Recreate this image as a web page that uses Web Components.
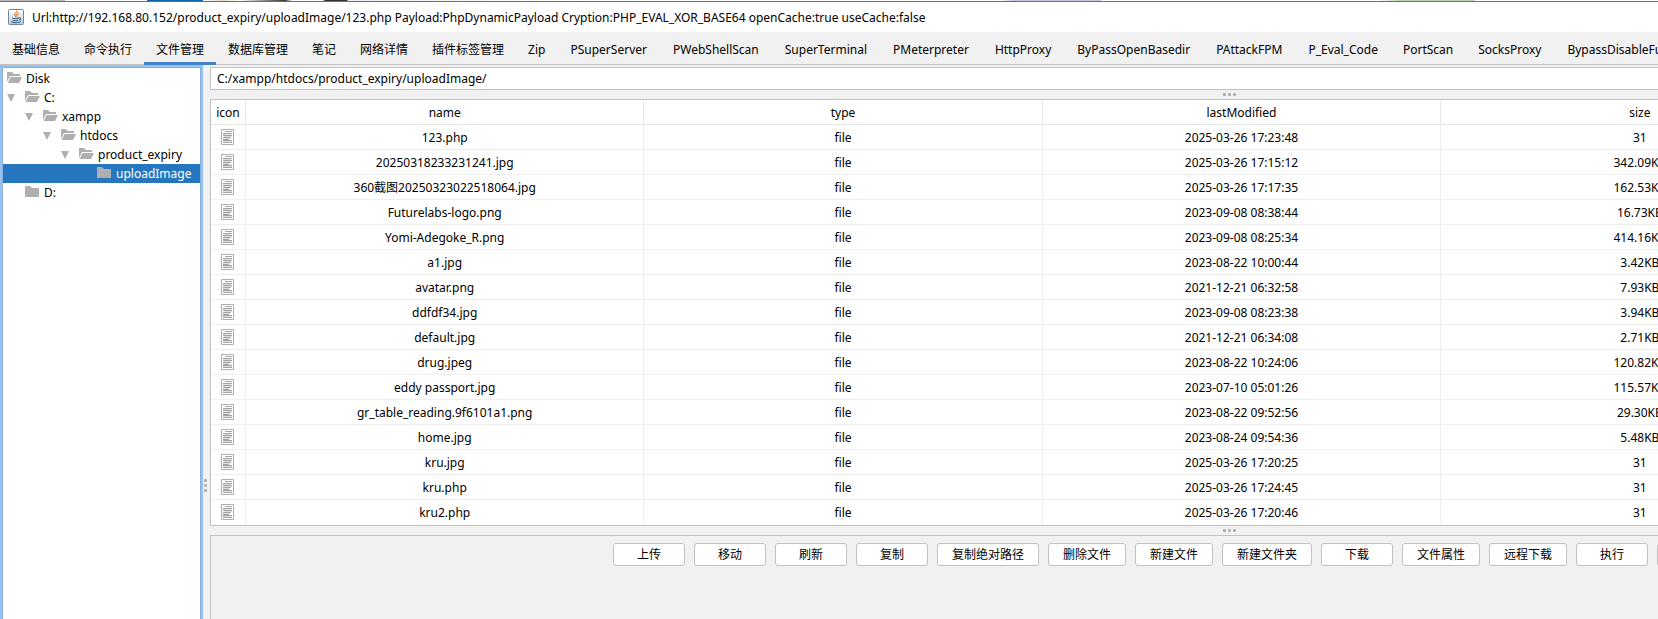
<!DOCTYPE html>
<html lang="zh-CN">
<head>
<meta charset="utf-8">
<title>Shell manager</title>
<style>
html, body { margin: 0; height: 100%; }
body { overflow: hidden; background: #f1f1f1; color: #000; font: 12px/19px "Noto Sans", "Noto Sans CJK SC", sans-serif; }
</style>
</head>
<body>
<app-window></app-window>
<script>
const define = (name, html, setup) => {
  const template = document.createElement('template');
  template.innerHTML = '<style>*{box-sizing:border-box}button,input{font:inherit;color:inherit}</style>' + html;
  customElements.define(name, class extends HTMLElement {
    constructor() {
      super();
      this.attachShadow({ mode: 'open' }).append(template.content.cloneNode(true));
    }
    connectedCallback() { if (setup) setup(this, this.shadowRoot); }
  });
};

/* Three dots in the middle of a split divider */
define('split-grip', `
<style>
:host { display: flex; align-items: center; justify-content: center; gap: 2px; height: 9px; }
:host([vertical]) { flex-direction: column; align-items: flex-start; padding-left: 1px; width: 7px; height: auto; }
i { width: 3px; height: 3px; border-radius: 1px; background: #afafaf; }
</style><i></i><i></i><i></i>`);

define('folder-icon', `
<style>:host { display: block; width: 15px; height: 12px; } svg { display: block; }
.closed, :host([closed]) .open { display: none; } :host([closed]) .closed { display: block; }</style>
<svg width="15" height="12" viewBox="0 0 15 12" fill="#afafaf" aria-hidden="true">
<path class="open" d="M0 0H5L7 2H13V4H3L0 10ZM3.6 5H15L12 11H0.6Z"/>
<path class="closed" d="M0 0H5L7 2H14V11H0Z"/>
</svg>`);

define('title-bar', `
<style>
:host { display: block; }
.behind { height: 2px; border-bottom: 1px solid #6e6e6e; background: linear-gradient(90deg, #bbb 65px, #fff 65px, #fff 147px, #0e63ab 147px, #0e63ab 203px, #fff 203px, #e9dcc8 222px, #fff 240px, #333 285px, #fff 292px, #fff 323px, #333 325px, #333 347px, #eee 348px, #fff 586px, #fff 1000px, #c8c4dd 1014px, #c8c4dd 1100px, #fff 1102px, #fff 1378px, #bcd4b4 1400px, #bcd4b4 1474px, #fff 1476px); }
.bar { display: flex; align-items: center; gap: 8px; height: 30px; padding: 0 8px; background: #fff; }
h1 { margin: 0; font: inherit; white-space: nowrap; }
svg { display: block; flex: none; }
</style>
<div class="behind"></div>
<div class="bar">
<svg width="16" height="16" viewBox="0 0 16 16" aria-hidden="true">
<defs><linearGradient id="g" x2="0" y2="1"><stop stop-color="#fff"/><stop offset="1" stop-color="#b9cbdc"/></linearGradient></defs>
<rect x=".5" y=".5" width="15" height="15" rx="1" fill="url(#g)" stroke="#6f879c"/>
<g fill="none" stroke-width="1.2" stroke-linecap="round">
<path d="M9 1.8C9.6 3.6 6 4.2 6.6 6C6.9 6.9 7.9 7.2 7.7 8M10.7 4.2C8.4 5.3 8.4 6 9 7" stroke="#ee7f2d"/>
<path d="M4.4 9C5 9.8 9.4 9.7 10.2 9M5.2 11.2C6.5 11.8 8.5 11.8 9.6 11.2M11 8.8C13.2 8.4 12.8 10.6 11.2 11M3.6 12.8C5 14 10.6 14 12.4 12.7" stroke="#47708f"/>
</g></svg>
<h1><slot></slot></h1>
</div>`);

define('tab-strip', `
<style>
:host { display: flex; box-sizing: border-box; height: 33px; box-shadow: inset 0 -1px #c2c2c2; background: #f1f1f1; }
button { flex: none; height: 33px; padding: 4px 12px 0; border: 0; border-bottom: 3px solid transparent; background: none; white-space: nowrap; }
.long { padding: 4px 13px 0; }
button[aria-selected=true] { border-color: #4083c9; }
</style>`, (host, root) => {
  host.setAttribute('role', 'tablist');
  for (const label of host.getAttribute('tabs').split(',')) {
    const b = document.createElement('button');
    b.type = 'button';
    b.setAttribute('role', 'tab');
    b.setAttribute('aria-selected', label === host.getAttribute('selected'));
    if (label.length > 8) b.className = 'long';
    b.textContent = label;
    root.append(b);
  }
});

define('tree-node', `
<style>
:host { display: flex; align-items: center; height: 19px; padding-left: calc(4px + 18px * var(--level, 0)); white-space: nowrap; }
:host([aria-selected=true]) { background: #2675bf; color: #fff; }
folder-icon { margin: 0 4px 2px 0; flex: none; }
:host([aria-expanded]:not([root])) { padding-left: calc(18px * var(--level) - 14px); }
.arrow { display: none; }
:host([aria-expanded]:not([root])) .arrow { display: block; margin-right: 10px; }
</style>
<svg class="arrow" width="8" height="8" viewBox="0 0 8 8" fill="#afafaf" aria-hidden="true"><path d="M0 0H8L4 8Z"/></svg>
<folder-icon></folder-icon><slot></slot>`, (host, root) => {
  host.setAttribute('role', 'treeitem');
  host.style.setProperty('--level', host.getAttribute('aria-level') - 1);
  if (!host.hasAttribute('aria-expanded')) root.querySelector('folder-icon').setAttribute('closed', '');
});

define('file-tree', `
<style>
:host { display: block; width: 203px; flex: none; border: 2px solid #97c3f3; background: #fff; }
div { height: 100%; border: 1px solid #87afda; padding-top: 1px; }
</style><div><slot></slot></div>`);

define('path-bar', `
<style>
:host { display: block; }
input { display: block; width: 100%; height: 23px; padding: 0 6px; border: 1px solid #c2c2c2; background: #fff; outline: 0; }
</style><input type="text" aria-label="Path">`, (host, root) => {
  root.querySelector('input').value = host.getAttribute('value');
});

define('file-table', `
<style>
:host { display: block; border: 1px solid #c2c2c2; background: #fff; padding-right: 9px; }
table { width: 100%; table-layout: fixed; border-collapse: separate; border-spacing: 0; }
th, td { height: 25px; padding: 0; font-weight: 400; text-align: center; white-space: nowrap; border: solid #efefef; border-width: 0 1px 1px 0; }
th { border-color: #e5e5e5; border-right: 0; }
th span { display: block; margin: 1px 0; height: 22px; line-height: 24px; border-right: 1px solid #e5e5e5; }
tr:last-child td { border-bottom-color: #fff; }
.icon { width: 35px; }
svg { display: block; margin: 0 auto 0 10px; }
</style>
<table>
<thead><tr><th class="icon"><span>icon</span></th><th><span>name</span></th><th><span>type</span></th><th><span>lastModified</span></th><th><span>size</span></th><th><span></span></th></tr></thead>
<tbody></tbody>
</table>`, (host, root) => {
  const icon = `<svg width="13" height="16" viewBox="0 0 13 16" aria-hidden="true"><path d="M.5.5H12.5V15.5H.5Z" fill="#fff" stroke="#afafaf"/><path d="M4 2.5H11M2 4.5H11M2 6.5H11M2 8.5H10M2 10.5H8M2 11.5H11M2 13.5H11" stroke="#a4a4a4"/><path d="M2 5.5H10M3 7.5H11M2 9.5H9M2 12.5H11" stroke="#dedede"/></svg>`;
  const rows = [
    ['123.php', '2025-03-26 17:23:48', '31'],
    ['20250318233231241.jpg', '2025-03-26 17:15:12', '342.09KB'],
    ['360截图20250323022518064.jpg', '2025-03-26 17:17:35', '162.53KB'],
    ['Futurelabs-logo.png', '2023-09-08 08:38:44', '16.73KB'],
    ['Yomi-Adegoke_R.png', '2023-09-08 08:25:34', '414.16KB'],
    ['a1.jpg', '2023-08-22 10:00:44', '3.42KB'],
    ['avatar.png', '2021-12-21 06:32:58', '7.93KB'],
    ['ddfdf34.jpg', '2023-09-08 08:23:38', '3.94KB'],
    ['default.jpg', '2021-12-21 06:34:08', '2.71KB'],
    ['drug.jpeg', '2023-08-22 10:24:06', '120.82KB'],
    ['eddy passport.jpg', '2023-07-10 05:01:26', '115.57KB'],
    ['gr_table_reading.9f6101a1.png', '2023-08-22 09:52:56', '29.30KB'],
    ['home.jpg', '2023-08-24 09:54:36', '5.48KB'],
    ['kru.jpg', '2025-03-26 17:20:25', '31'],
    ['kru.php', '2025-03-26 17:24:45', '31'],
    ['kru2.php', '2025-03-26 17:20:46', '31']
  ];
  root.querySelector('tbody').innerHTML = rows.map(([name, date, size]) =>
    `<tr><td>${icon}</td><td>${name}</td><td>file</td><td>${date}</td><td>${size}</td><td></td></tr>`).join('');
});

define('action-button', `
<style>
:host { display: block; }
button { display: block; min-width: 72px; height: 23px; padding: 0 14px; border: 1px solid #c2c2c2; border-radius: 3px; background: #fff; white-space: nowrap; }
:host([wide]) button { width: 90px; }
</style><button type="button"><slot></slot></button>`);

define('action-bar', `
<style>
:host { display: flex; justify-content: center; align-items: flex-start; gap: 9px; flex: 1; padding: 7px 0 0 1px; border: 1px solid #c2c2c2; }
</style><slot></slot>`);

/* The window is larger than a small screen and is clipped by it */
define('app-window', `
<style>
:host { display: flex; flex-direction: column; min-width: 2248px; min-height: 906px; height: 100%; }
main { display: flex; flex: 1; }
section { display: flex; flex-direction: column; flex: 1; padding-top: 2px; }
</style>
<title-bar>Url:http://192.168.80.152/product_expiry/uploadImage/123.php Payload:PhpDynamicPayload Cryption:PHP_EVAL_XOR_BASE64 openCache:true useCache:false</title-bar>
<tab-strip selected="文件管理" tabs="基础信息,命令执行,文件管理,数据库管理,笔记,网络详情,插件标签管理,Zip,PSuperServer,PWebShellScan,SuperTerminal,PMeterpreter,HttpProxy,ByPassOpenBasedir,PAttackFPM,P_Eval_Code,PortScan,SocksProxy,BypassDisableFunction"></tab-strip>
<main>
<file-tree role="tree" aria-label="Disk">
<tree-node aria-level="1" aria-expanded="true" root>Disk</tree-node>
<tree-node aria-level="2" aria-expanded="true">C:</tree-node>
<tree-node aria-level="3" aria-expanded="true">xampp</tree-node>
<tree-node aria-level="4" aria-expanded="true">htdocs</tree-node>
<tree-node aria-level="5" aria-expanded="true">product_expiry</tree-node>
<tree-node aria-level="6" aria-selected="true">uploadImage</tree-node>
<tree-node aria-level="2">D:</tree-node>
</file-tree>
<split-grip vertical></split-grip>
<section>
<path-bar value="C:/xampp/htdocs/product_expiry/uploadImage/"></path-bar>
<split-grip></split-grip>
<file-table></file-table>
<split-grip></split-grip>
<action-bar>
<action-button>上传</action-button><action-button>移动</action-button><action-button>刷新</action-button><action-button>复制</action-button><action-button>复制绝对路径</action-button><action-button>删除文件</action-button><action-button>新建文件</action-button><action-button>新建文件夹</action-button><action-button>下载</action-button><action-button>文件属性</action-button><action-button>远程下载</action-button><action-button>执行</action-button><action-button wide></action-button><action-button wide></action-button>
</action-bar>
</section>
</main>`);
</script>
</body>
</html>
